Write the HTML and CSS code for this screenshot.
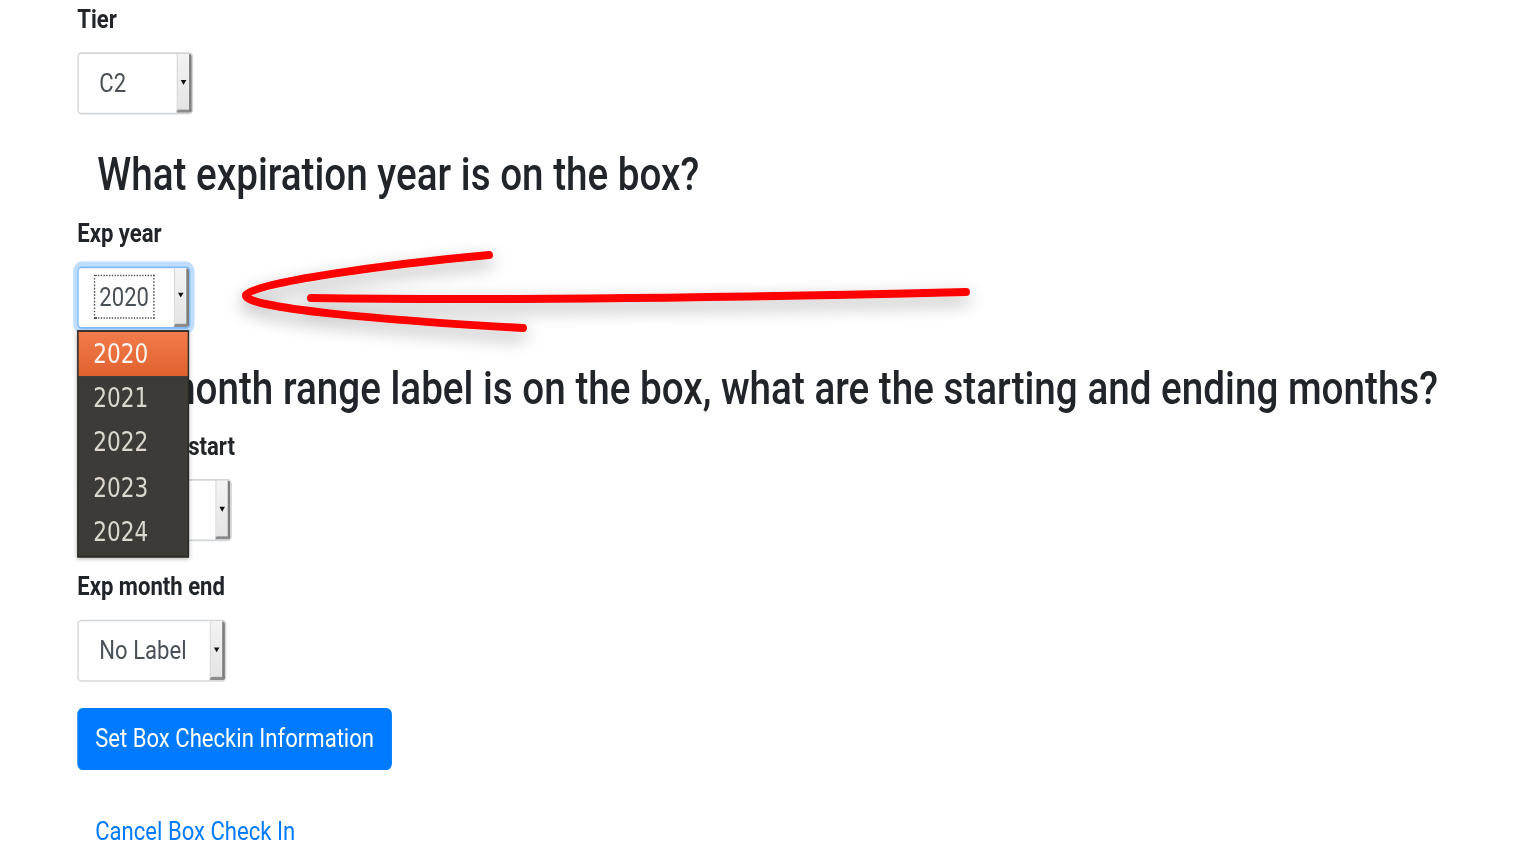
FILE: index.html
```html
<!DOCTYPE html>
<html lang="en">
<head>
<meta charset="utf-8">
<title>Box Check In</title>
<link rel="stylesheet" href="styles.css">
</head>
<body>
<div class="page">
  <form class="checkin-form">
    <div class="form-group">
      <label class="form-label">Tier</label>
      <div class="select select-tier">
        <span class="select-value">C2</span>
        <span class="select-arrow"><i class="caret"></i></span>
      </div>
    </div>

    <h3 class="question">What expiration year is on the box?</h3>

    <div class="form-group">
      <label class="form-label">Exp year</label>
      <div class="select-wrap">
        <div class="select select-year is-focused">
          <span class="select-value"><span class="focus-ring">2020</span></span>
          <span class="select-arrow"><i class="caret"></i></span>
        </div>
        <ul class="popup">
          <li class="popup-item is-active">2020</li>
          <li class="popup-item">2021</li>
          <li class="popup-item">2022</li>
          <li class="popup-item">2023</li>
          <li class="popup-item">2024</li>
        </ul>
      </div>
    </div>

    <h3 class="question">If a month range label is on the box, what are the starting and ending months?</h3>

    <div class="form-group">
      <label class="form-label">Exp month start</label>
      <div class="select select-start">
        <span class="select-value">No Label</span>
        <span class="select-arrow"><i class="caret"></i></span>
      </div>
    </div>

    <div class="form-group">
      <label class="form-label">Exp month end</label>
      <div class="select select-end">
        <span class="select-value">No Label</span>
        <span class="select-arrow"><i class="caret"></i></span>
      </div>
    </div>

    <div class="action">
      <button type="button" class="btn btn-primary">Set Box Checkin Information</button>
    </div>
    <div class="action">
      <button type="button" class="btn btn-link">Cancel Box Check In</button>
    </div>
  </form>
</div>

<svg class="annotation" width="1536" height="862" viewBox="0 0 1536 862" xmlns="http://www.w3.org/2000/svg">
  <defs>
    <filter id="shadow" x="-20%" y="-100%" width="140%" height="300%">
      <feGaussianBlur in="SourceAlpha" stdDeviation="9"/>
      <feOffset dx="0" dy="7" result="blur"/>
      <feComponentTransfer><feFuncA type="linear" slope="0.35"/></feComponentTransfer>
      <feMerge><feMergeNode/><feMergeNode in="SourceGraphic"/></feMerge>
    </filter>
  </defs>
  <g filter="url(#shadow)" fill="none" stroke="#ff0000" stroke-width="8" stroke-linecap="round" stroke-linejoin="round">
    <path d="M311 298 C 520 301, 760 297, 966 292"/>
    <path d="M489 255 C 390 264, 250 283, 246 295 C 243 308, 380 320, 523 328"/>
  </g>
</svg>
</body>
</html>
```

FILE: styles.css
```css
html, body {
  margin: 0;
  padding: 0;
  background: #ffffff;
}

body {
  width: 1536px;
  height: 862px;
  overflow: hidden;
  position: relative;
  font-family: Roboto, "Liberation Sans", Arial, sans-serif;
  color: #212529;
}

.page {
  width: 1113px;
  padding-left: 56px;
  box-sizing: border-box;
  transform: scale(1.38, 1.635);
  transform-origin: 0 0;
}

.checkin-form {
  margin: 0;
}

.form-group {
  margin-bottom: 16px;
}

.form-label {
  display: block;
  margin-bottom: 8px;
  font-size: 16px;
  line-height: 24px;
  font-weight: 700;
  color: #212529;
}

.question {
  margin: 0 0 7px;
  padding: 4px 0 0 14.5px;
  font-size: 28px;
  line-height: 1.2;
  font-weight: 500;
  color: #212529;
  white-space: nowrap;
}

.select-wrap {
  position: relative;
}

.select {
  display: flex;
  height: 38px;
  box-sizing: border-box;
  border: 1px solid #d3d6d9;
  border-radius: 3px;
  background: #ffffff;
  overflow: hidden;
}

.select-tier { width: 84px; }
.select-year { width: 82px; }
.select-start { width: 112px; }
.select-end { width: 108px; }

.select.is-focused {
  border-color: #80bdff;
  box-shadow: 0 0 0 3px rgba(0, 123, 255, 0.25);
}

.select-value {
  flex: 1;
  padding-left: 15px;
  font-size: 16px;
  line-height: 36px;
  color: #495057;
  white-space: nowrap;
}

.focus-ring {
  outline: 1px dotted #555;
  outline-offset: 3px;
}

.select-arrow {
  width: 8px;
  display: flex;
  align-items: center;
  justify-content: center;
  background: linear-gradient(#f3f3f3, #e4e4e4);
  border-left: 1px solid #dcdcdc;
  border-right: 2px solid #7d7d7d;
  border-bottom: 2px solid #8a8a8a;
}

.caret {
  display: block;
  width: 0;
  height: 0;
  border-left: 2.2px solid transparent;
  border-right: 2.2px solid transparent;
  border-top: 3px solid #111;
}

.popup {
  position: absolute;
  top: 39px;
  left: 0;
  z-index: 5;
  width: 80.5px;
  margin: 0;
  padding: 0;
  list-style: none;
  box-sizing: border-box;
  background: #3c3b37;
  border: 1px solid #2a2926;
  box-shadow: 0 1px 3px rgba(0, 0, 0, 0.3);
}

.popup-item {
  height: 27.4px;
  line-height: 27.4px;
  padding-left: 10.5px;
  font-family: "DejaVu Sans", sans-serif;
  font-size: 15.7px;
  color: #dcd8ce;
}

.popup-item.is-active {
  background: linear-gradient(#f27c4c, #e0612d);
  color: #fbf3ee;
}

.action {
  margin-bottom: 19px;
}

.btn {
  display: inline-block;
  margin: 0;
  padding: 6px 12px;
  border: 1px solid transparent;
  border-radius: 4px;
  font-family: Roboto, "Liberation Sans", Arial, sans-serif;
  font-size: 16px;
  line-height: 24px;
  font-weight: 400;
  cursor: pointer;
}

.btn-primary {
  background: #007bff;
  border-color: #007bff;
  color: #ffffff;
}

.btn-link {
  background: transparent;
  color: #007bff;
}

.annotation {
  position: absolute;
  top: 0;
  left: 0;
  pointer-events: none;
}
```
